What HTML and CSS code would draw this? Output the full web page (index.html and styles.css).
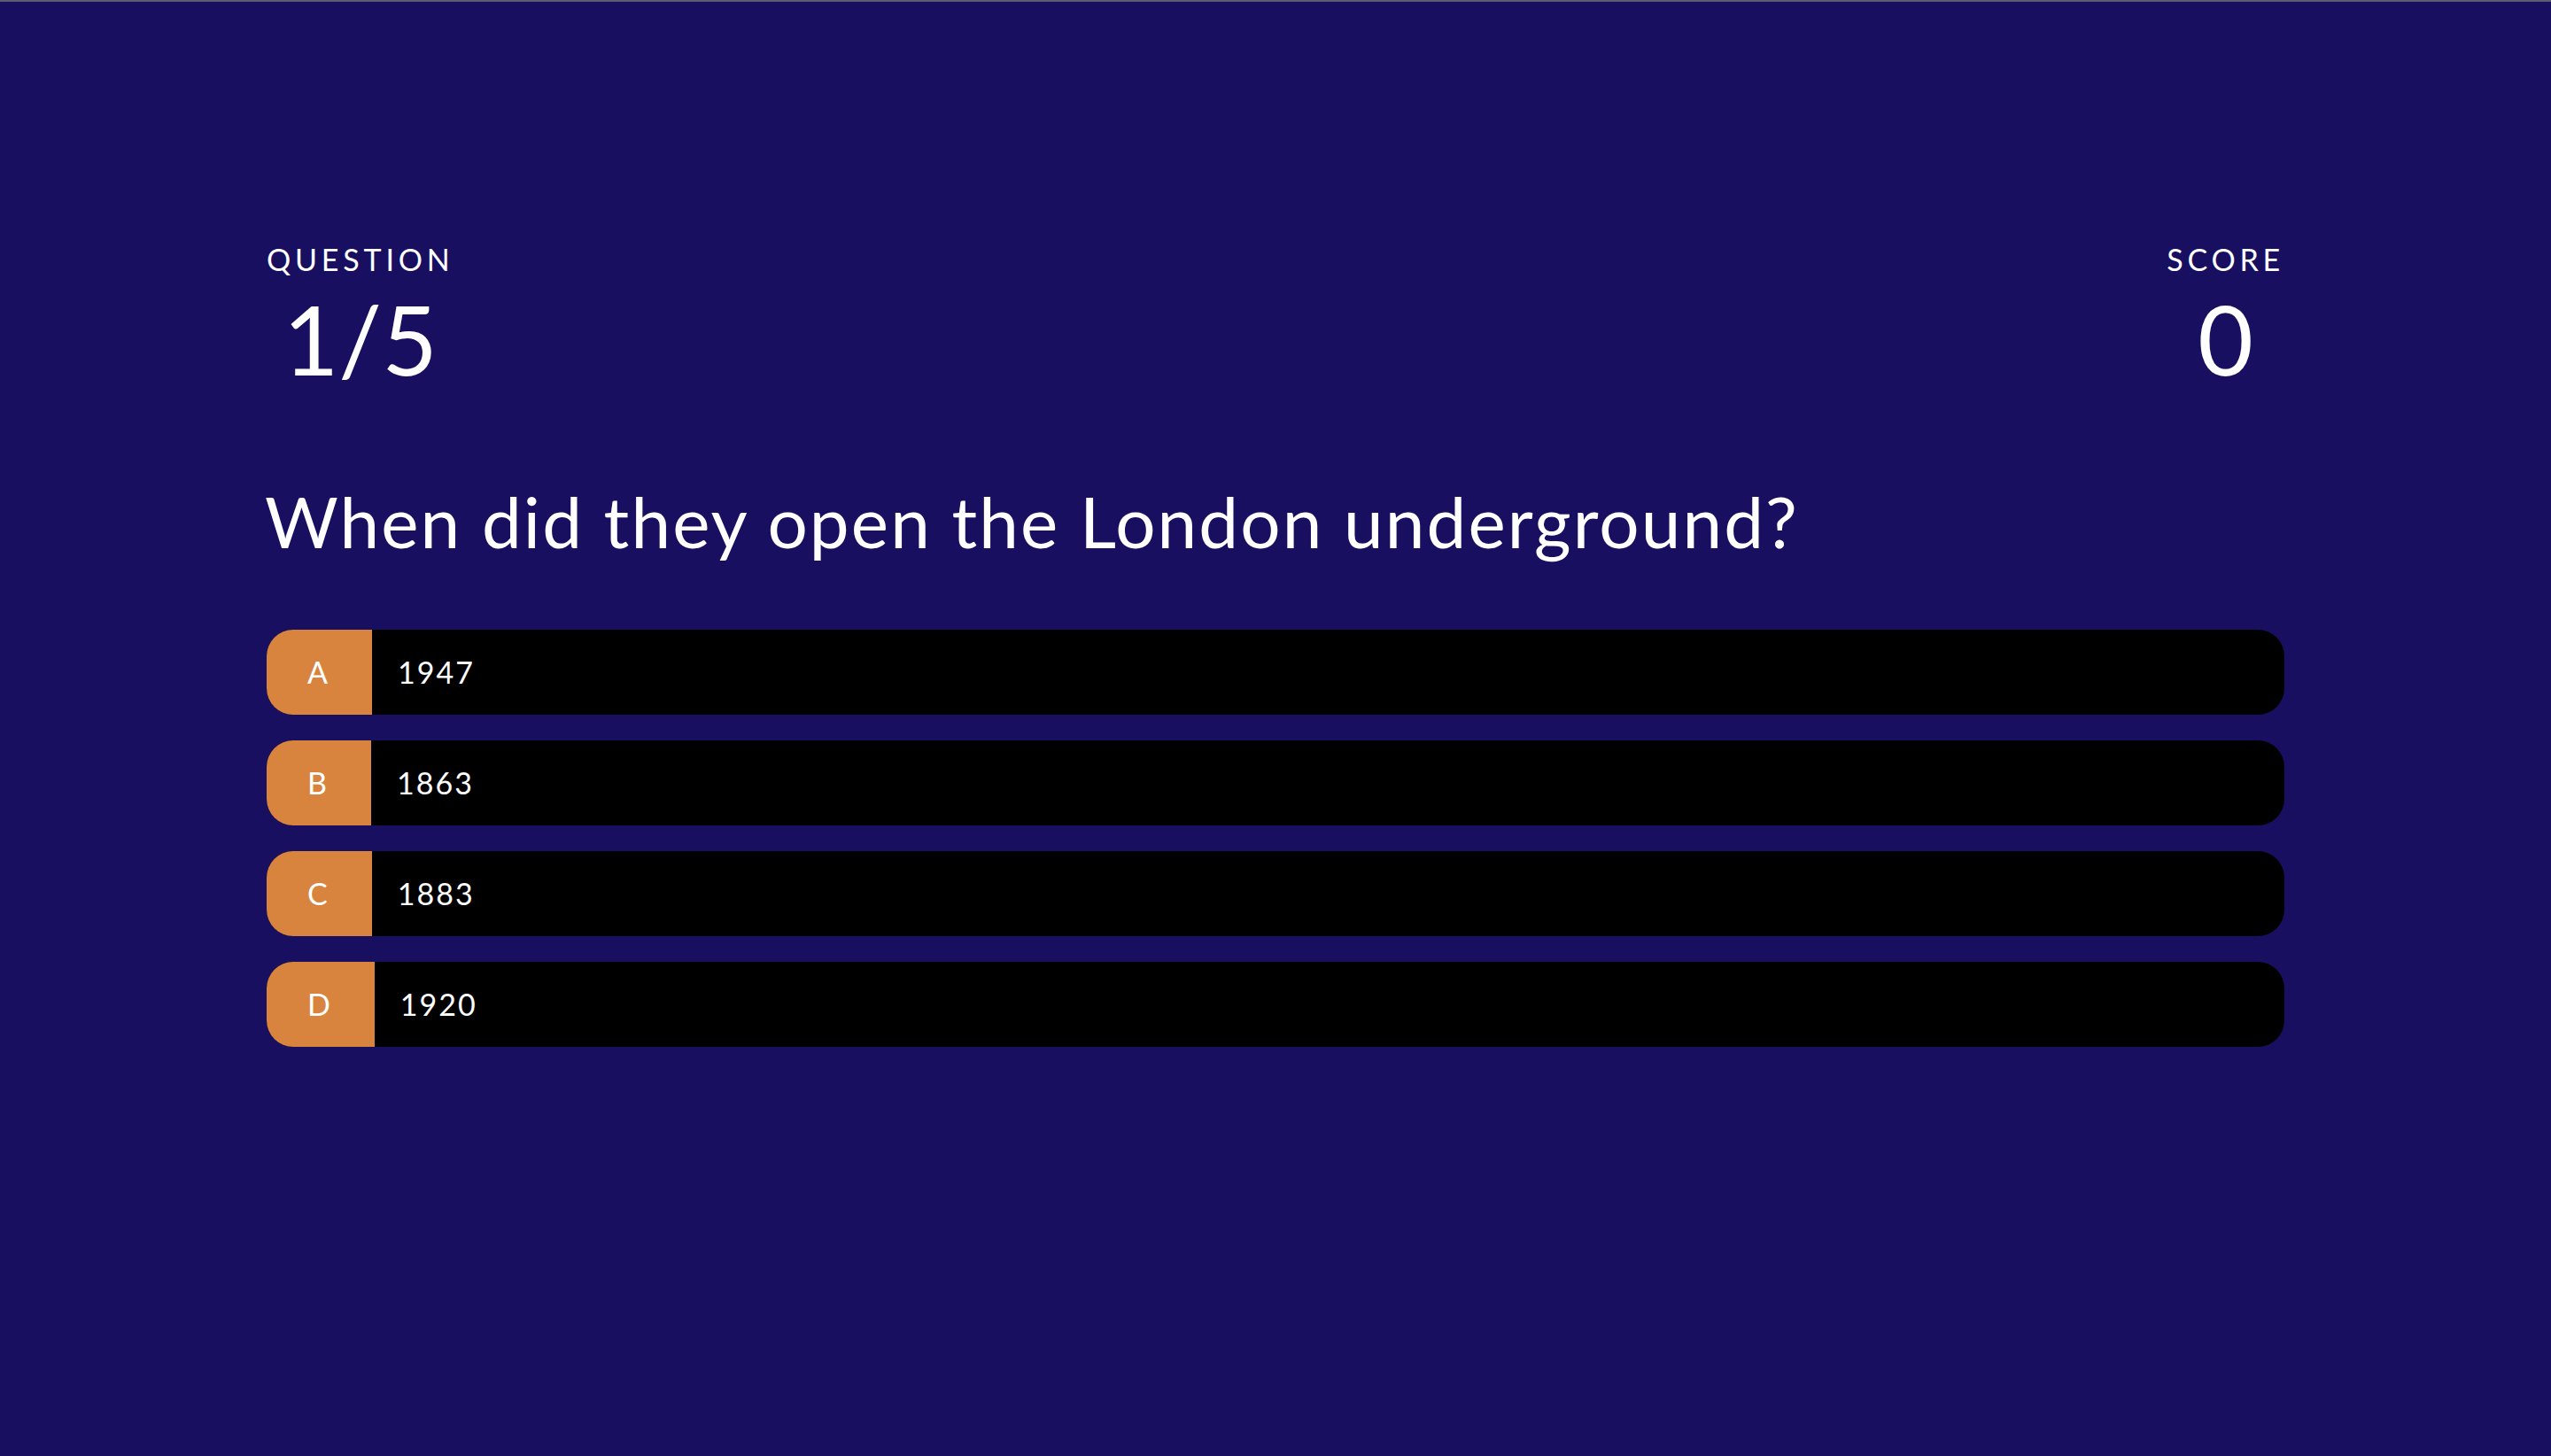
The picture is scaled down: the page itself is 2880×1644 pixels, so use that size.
FILE: index.html
```html
<!DOCTYPE html>
<html lang="en">
<head>
<meta charset="utf-8">
<title>Quiz</title>
<link rel="stylesheet" href="styles.css">
</head>
<body>
<main class="quiz">
  <header class="stats">
    <div class="stat">
      <div class="stat-label">QUESTION</div>
      <div class="stat-value">1/5</div>
    </div>
    <div class="stat">
      <div class="stat-label">SCORE</div>
      <div class="stat-value">0</div>
    </div>
  </header>
  <h1 class="question">When did they open the London underground?</h1>
  <ul class="options">
    <li class="option"><span class="option-key">A</span><span class="option-text">1947</span></li>
    <li class="option"><span class="option-key">B</span><span class="option-text">1863</span></li>
    <li class="option"><span class="option-key">C</span><span class="option-text">1883</span></li>
    <li class="option"><span class="option-key">D</span><span class="option-text">1920</span></li>
  </ul>
</main>
</body>
</html>
```
FILE: styles.css
```css
* { box-sizing: border-box; }
html, body { margin: 0; padding: 0; }
body {
  background: #180f61;
  border-top: 2px solid #5c5c74;
  min-height: 1644px;
  font-family: Lato, "Open Sans", sans-serif;
  color: #ffffff;
  line-height: 1.2;
}
.quiz {
  width: 2278px;
  margin: 0 auto;
  padding-top: 271px;
}
.stats {
  display: flex;
  justify-content: space-between;
  align-items: flex-start;
}
.stat {
  display: flex;
  flex-direction: column;
  align-items: center;
  gap: 4px;
}
.stat-label {
  font-size: 34px;
  letter-spacing: 4.8px;
}
.stat-value {
  font-size: 108px;
}
.question {
  margin: 93px 0 75px -2px;
  font-size: 80px;
  font-weight: 400;
  letter-spacing: 2.1px;
}
.options {
  list-style: none;
  margin: 0;
  padding: 0;
  display: flex;
  flex-direction: column;
  gap: 29px;
}
.option {
  display: flex;
  align-items: stretch;
  height: 96px;
  background: #000000;
  border-radius: 30px;
  overflow: hidden;
  font-size: 34px;
  letter-spacing: 2px;
}
.option-key {
  display: flex;
  align-items: center;
  padding: 0 48px 0 46px;
  background: #d8843f;
}
.option-text {
  display: flex;
  align-items: center;
  padding-left: 29px;
}
```
